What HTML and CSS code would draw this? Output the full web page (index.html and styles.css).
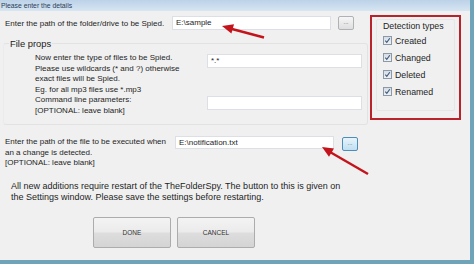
FILE: index.html
```html
<!DOCTYPE html>
<html>
<head>
<meta charset="utf-8">
<link rel="stylesheet" href="styles.css">
</head>
<body>
<div class="window">
  <div class="titlebar">Please enter the details</div>
  <div class="main">
    <div class="left">
      <div class="row1">
        <div class="label1">Enter the path of the folder/drive to be Spied.</div>
        <div class="input path">E:\sample</div>
        <div class="browse">...</div>
      </div>
      <fieldset class="group">
        <legend>File props</legend>
        <div class="subrow first">
          <div class="subtext">Now enter the type of files to be Spied.<br>Please use wildcards (* and ?) otherwise<br>exact files will be Spied.<br>Eg. for all mp3 files use *.mp3</div>
          <div class="input wide">*.*</div>
        </div>
        <div class="subrow second">
          <div class="subtext">Command line parameters:<br>[OPTIONAL: leave blank]</div>
          <div class="input wide"></div>
        </div>
      </fieldset>
      <div class="row3">
        <div class="label3">Enter the path of the file to be executed when<br>an a change is detected.<br>[OPTIONAL: leave blank]</div>
        <div class="input path">E:\notification.txt</div>
        <div class="browse hot">...</div>
      </div>
    </div>
    <div class="detect">
      <div class="detect-inner">
        <div class="dtitle">Detection types</div>
        <div class="check"><span class="box"><svg width="9" height="9" viewBox="0 0 9 9"><path d="M2.3 4.6 L3.8 6.4 L6.8 2.2" fill="none" stroke="#3d5878" stroke-width="1.1"/></svg></span>Created</div>
        <div class="check"><span class="box"><svg width="9" height="9" viewBox="0 0 9 9"><path d="M2.3 4.6 L3.8 6.4 L6.8 2.2" fill="none" stroke="#3d5878" stroke-width="1.1"/></svg></span>Changed</div>
        <div class="check"><span class="box"><svg width="9" height="9" viewBox="0 0 9 9"><path d="M2.3 4.6 L3.8 6.4 L6.8 2.2" fill="none" stroke="#3d5878" stroke-width="1.1"/></svg></span>Deleted</div>
        <div class="check"><span class="box"><svg width="9" height="9" viewBox="0 0 9 9"><path d="M2.3 4.6 L3.8 6.4 L6.8 2.2" fill="none" stroke="#3d5878" stroke-width="1.1"/></svg></span>Renamed</div>
      </div>
    </div>
  </div>
  <p class="note">All new additions require restart of the TheFolderSpy. The button to this is given on<br>the Settings window. Please save the settings before restarting.</p>
  <div class="buttons">
    <div class="btn">DONE</div>
    <div class="btn">CANCEL</div>
  </div>
  <svg class="arrows" width="474" height="264" viewBox="0 0 474 264">
    <line x1="264" y1="37.5" x2="232" y2="29" stroke="#c3141c" stroke-width="2.4"/>
    <polygon points="222,26 234,24.3 231.4,33.4" fill="#c3141c"/>
    <line x1="368" y1="174" x2="330" y2="152" stroke="#c3141c" stroke-width="2.4"/>
    <polygon points="322,147 334,148.5 329,156.8" fill="#c3141c"/>
  </svg>
</div>
</body>
</html>
```

FILE: styles.css
```css
* { box-sizing: border-box; }
html, body { margin: 0; padding: 0; background: #f0f0f0; }
body { font-family: "Liberation Sans", Arial, sans-serif; color: #1e1e1e; }

.window {
  position: relative;
  width: 474px;
  height: 264px;
  background: #f0f0f0;
  border-right: 4px solid #6fa3b7;
  border-bottom: 4px solid #6fa3b7;
  overflow: hidden;
}

.titlebar {
  height: 11px;
  line-height: 11px;
  font-size: 6.8px;
  padding-left: 1px;
  color: #2b3d58;
  background: linear-gradient(#bcd2e8, #d7e5f2);
}

.main { display: flex; padding-top: 4px; }
.left { width: 368px; }

.row1 { display: flex; align-items: center; height: 16px; padding-left: 5px; }
.label1 { width: 167px; font-size: 8px; }

.input {
  height: 14px;
  background: #fff;
  border: 1px solid #dcdfe3;
  font-size: 8px;
  line-height: 12px;
  padding-left: 3px;
}
.input.path { width: 159px; }
.input.wide { width: 155px; }

.browse {
  margin-left: 7px;
  width: 16px;
  height: 14px;
  border: 1px solid #aeb2b6;
  border-radius: 2px;
  background: linear-gradient(#f6f6f6, #dedede);
  font-size: 6px;
  line-height: 10px;
  text-align: center;
  color: #555;
}
.browse.hot {
  border-color: #4d8db8;
  background: linear-gradient(#e8f4fb, #bfe0f2);
}

.group {
  margin: 7px 0 0 3px;
  width: 365px;
  height: 87px;
  border: 1px solid #e2e2e2;
  border-left-color: #ebebeb;
  border-radius: 3px;
  padding: 0;
}
.group legend {
  font-size: 9.4px;
  padding: 0 1px;
  margin-left: 5px;
  color: #222;
}
.subrow { display: flex; align-items: flex-start; margin-left: 31px; }
.subrow.first { margin-top: 4px; }
.subrow.second { margin-top: 0; }
.subtext { width: 172px; font-size: 8px; line-height: 10.6px; }
.subrow .input { margin-top: 1px; }

.row3 { display: flex; align-items: flex-start; padding-left: 5px; margin-top: 11px; }
.label3 { width: 170px; font-size: 8px; line-height: 10.5px; margin-top: 1px; }
.row3 .input { margin-top: 0; height: 13px; }
.row3 .browse { margin-top: 1px; margin-left: 8px; }

.detect {
  margin-left: 2px;
  width: 91px;
  height: 105px;
  border: 2px solid #b8232b;
  padding: 2px 4px 0 4px;
}
.detect-inner {
  height: 92px;
  border: 1px solid #e6e6e6;
  border-radius: 2px;
  padding: 1px 0 0 6px;
}
.dtitle { font-size: 8.8px; line-height: 11px; }
.check { display: flex; align-items: center; font-size: 8.8px; height: 17px; }
.box {
  width: 9px; height: 9px;
  border: 1px solid #8c99a8;
  background: linear-gradient(#d6dde6, #eef1f5);
  margin-right: 3px;
  display: flex; align-items: center; justify-content: center;
}
.box svg { display: block; margin: -1px; }

.note {
  margin: 12px 0 0 11px;
  font-size: 9px;
  line-height: 11px;
}

.buttons { display: flex; gap: 6px; margin: 14px 0 0 93px; }
.btn {
  width: 78px;
  height: 31px;
  border: 1px solid #acacac;
  border-radius: 2px;
  background: linear-gradient(#f3f3f3 0%, #ebebeb 48%, #dddddd 52%, #d4d4d4 100%);
  font-size: 6.5px;
  line-height: 29px;
  text-align: center;
  color: #333;
}

.arrows { position: absolute; left: 0; top: 0; pointer-events: none; }
```
